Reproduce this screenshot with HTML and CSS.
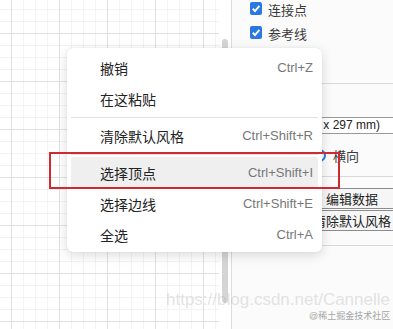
FILE: index.html
```html
<!DOCTYPE html>
<html lang="zh-CN">
<head>
    <meta charset="UTF-8">
    <meta name="viewport" content="width=device-width, initial-scale=1.0">
    <title>右键菜单</title>
    <link rel="stylesheet" href="styles.css">
</head>
<body>
    <div class="editor">
        <div class="canvas"></div>
        <div class="vscroll"><div class="thumb"></div></div>

        <!-- Format panel -->
        <aside class="panel">
            <div class="panel-inner">
                <div class="options">
                    <label class="check">
                        <svg class="box" width="12" height="13" viewBox="0 0 12 13"><rect width="12" height="13" rx="2" fill="#2a78e4"/><path d="M2.8 6.8 L5 9.1 L9.4 3.8" fill="none" stroke="#fff" stroke-width="2"/></svg>
                        连接点
                    </label>
                    <label class="check">
                        <svg class="box" width="12" height="13" viewBox="0 0 12 13"><rect width="12" height="13" rx="2" fill="#2a78e4"/><path d="M2.8 6.8 L5 9.1 L9.4 3.8" fill="none" stroke="#fff" stroke-width="2"/></svg>
                        参考线
                    </label>
                </div>

                <div class="section paper">
                    <div class="section-title">纸张尺寸</div>
                    <div class="select">A4 (210 x 297 mm)</div>
                    <div class="orient">
                        <label class="radio"><span class="dot"></span>竖向</label>
                        <label class="radio checked"><span class="dot"></span>横向</label>
                    </div>
                </div>

                <div class="section actions">
                    <button class="panel-btn">编辑数据</button>
                    <button class="panel-btn">清除默认风格</button>
                </div>
            </div>
        </aside>
    </div>

    <!-- Context menu -->
    <ul class="context-menu">
        <li class="menu-item"><span>撤销</span><span class="key">Ctrl+Z</span></li>
        <li class="menu-item"><span>在这粘贴</span></li>
        <li class="menu-sep"></li>
        <li class="menu-item"><span>清除默认风格</span><span class="key">Ctrl+Shift+R</span></li>
        <li class="menu-sep"></li>
        <li class="menu-item active"><span>选择顶点</span><span class="key">Ctrl+Shift+I</span></li>
        <li class="menu-item"><span>选择边线</span><span class="key">Ctrl+Shift+E</span></li>
        <li class="menu-item"><span>全选</span><span class="key">Ctrl+A</span></li>
    </ul>

    <div class="annotation"></div>

    <div class="watermark">https://blog.csdn.net/Cannelle</div>
    <div class="credit">@稀土掘金技术社区</div>
</body>
</html>
```

FILE: styles.css
```css
body {
    margin: 0;
    font-family: "Liberation Sans", "Noto Sans CJK SC", sans-serif;
    background: #fff;
    color: #222;
    overflow: hidden;
}
.editor {
    display: flex;
    height: 329px;
}

/* drawing area with grid */
.canvas {
    flex: none;
    width: 219px;
    background-color: #fff;
    background-image:
        linear-gradient(to right, #e0e0e0 1px, transparent 1px),
        linear-gradient(to bottom, #e0e0e0 1px, transparent 1px),
        linear-gradient(to right, #f3f3f3 1px, transparent 1px),
        linear-gradient(to bottom, #f3f3f3 1px, transparent 1px);
    background-size: 48px 48px, 48px 48px, 12px 12px, 12px 12px;
    background-position: 11px 33px, 11px 33px, 11px 9px, 11px 9px;
}
.vscroll {
    flex: none;
    width: 12px;
    border-right: 1px solid #dcdcdc;
    background: #fff;
}
.thumb {
    margin: 39px 0 0 3px;
    width: 6px;
    height: 264px;
    border-radius: 3px;
    background: #d5d5d5;
}

/* format panel */
.panel {
    flex: 1;
    overflow: hidden;
    background: #fbfbfb;
    font-size: 13px;
    color: #3a3a3a;
}
.panel-inner {
    width: 240px;
}
.options {
    margin-top: -3px;
    padding-left: 18px;
}
.check {
    display: flex;
    align-items: center;
    height: 24px;
}
.check .box {
    margin-right: 6px;
    margin-top: -2px;
}
.section {
    border-top: 1px solid #dadada;
}
.paper {
    margin-top: 38px;
    padding: 10px 0 12px 18px;
}
.section-title {
    height: 18px;
    line-height: 18px;
    font-weight: bold;
}
.select {
    margin: 5px 0 0 22px;
    width: 202px;
    height: 15px;
    line-height: 15px;
    padding-left: 5px;
    border: 1px solid #9a9a9a;
    background: #fff;
    font-size: 12px;
    color: #222;
}
.orient {
    display: flex;
    align-items: center;
    height: 18px;
    margin-top: 12px;
}
.radio {
    display: flex;
    align-items: center;
}
.radio + .radio {
    margin-left: 17px;
}
.radio .dot {
    width: 11px;
    height: 11px;
    margin-right: 7px;
    border: 1px solid #777;
    border-radius: 50%;
    background: #fff;
}
.radio.checked .dot {
    border: 2px solid #2a78e4;
    width: 9px;
    height: 9px;
}
.actions {
    padding: 11px 0 14px 19px;
    display: flex;
    flex-direction: column;
    gap: 1px;
    border-bottom: 1px solid #dadada;
}
.panel-btn {
    width: 202px;
    height: 21px;
    padding: 0;
    border: 1px solid #8c8c8c;
    background: #f6f6f6;
    font-family: inherit;
    font-size: 13px;
    color: #222;
}

/* right-click menu */
.context-menu {
    position: absolute;
    left: 67px;
    top: 48px;
    width: 255px;
    margin: 0;
    padding: 4px 0 2px;
    list-style: none;
    background: #fff;
    border-radius: 6px;
    box-shadow: 0 3px 12px rgba(0, 0, 0, 0.15), 0 0 1px rgba(0, 0, 0, 0.12);
}
.menu-item {
    display: flex;
    justify-content: space-between;
    align-items: center;
    height: 31px;
    margin: 0 4px;
    padding: 0 5px 0 29px;
    border-radius: 3px;
    font-size: 14px;
    color: #222;
}
.menu-item .key {
    font-size: 13px;
    color: #777;
}
.menu-item.active {
    background: #efefef;
}
.menu-sep {
    height: 1px;
    margin: 3px 4px 2px;
    background: #e2e2e2;
}

/* red highlight drawn on the screenshot */
.annotation {
    position: absolute;
    left: 49px;
    top: 152px;
    width: 287px;
    height: 33px;
    border: 2px solid #cf2a30;
}

.watermark {
    position: absolute;
    left: 166px;
    top: 290px;
    font-size: 17px;
    color: rgba(185, 185, 185, 0.4);
    white-space: nowrap;
}
.credit {
    position: absolute;
    left: 309px;
    top: 309px;
    font-size: 9px;
    color: #a5a5a5;
    white-space: nowrap;
}
```
